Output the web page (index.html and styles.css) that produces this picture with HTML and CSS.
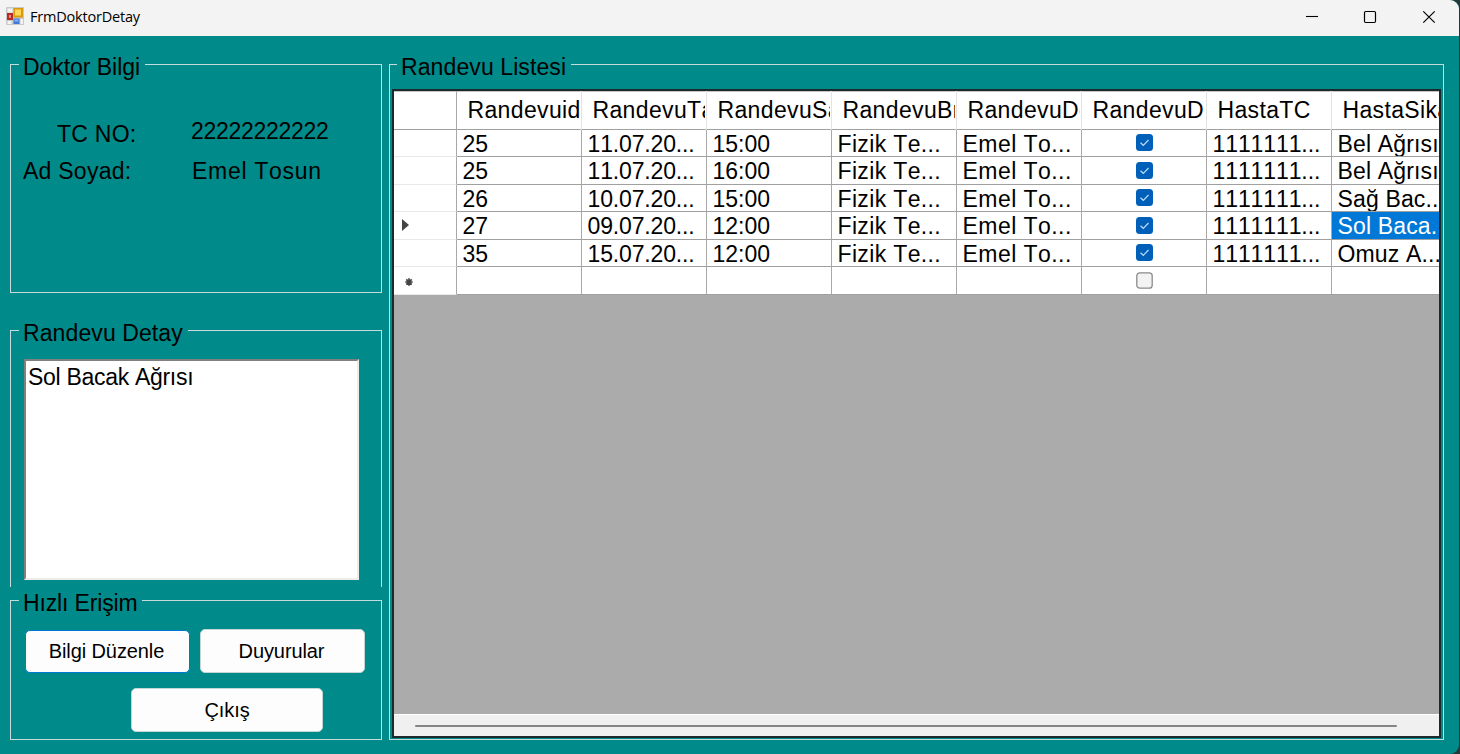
FILE: index.html
```html
<!DOCTYPE html>
<html lang="tr">
<head>
<meta charset="utf-8">
<title>FrmDoktorDetay</title>
<link rel="stylesheet" href="styles.css">
</head>
<body>
<div class="window">
  <header class="titlebar">
    <svg class="app-icon" width="18" height="18" viewBox="0 0 18 18">
      <rect width="18" height="18" rx="1" fill="#c9c9c9"/>
      <rect x="1.5" y="1.5" width="5" height="4" fill="#f4f4f4"/>
      <rect x="1" y="6" width="6" height="7" fill="#b52a22"/>
      <rect x="3" y="8" width="2" height="3" fill="#e58c80"/>
      <rect x="7.500" y="1" width="9.500" height="9.500" fill="#d99a10"/>
      <rect x="9" y="2.500" width="6" height="6" fill="#ffd75a"/>
      <rect x="7.500" y="11.500" width="6" height="5.500" fill="#3f78d8"/>
      <rect x="8.500" y="12.500" width="4" height="2" fill="#86b2f3"/>
      <rect x="1.500" y="14" width="4" height="3" fill="#f4f4f4"/>
      <rect x="14.500" y="12" width="2.500" height="5" fill="#f4f4f4"/>
    </svg>
    <span class="title">FrmDoktorDetay</span>
    <div class="controls">
      <svg width="58" height="36" viewBox="0 0 58 36"><path d="M17 16.500H29" stroke="#000" stroke-width="1.100"/></svg>
      <svg width="58" height="36" viewBox="0 0 58 36"><rect x="17.500" y="11.500" width="11" height="11" rx="1.200" fill="none" stroke="#000" stroke-width="1.200"/></svg>
      <svg width="58" height="36" viewBox="0 0 58 36"><path d="M18.300 11.300L29.700 22.700M29.700 11.300L18.300 22.700" stroke="#000" stroke-width="1.200"/></svg>
    </div>
  </header>
  <main class="form">
    <div class="side">
      <fieldset class="group info">
        <legend>Doktor Bilgi</legend>
        <div class="pair">
          <span class="label tc">TC NO:</span><span class="value number">22222222222</span>
          <span class="label">Ad Soyad:</span><span class="value">Emel Tosun</span>
        </div>
      </fieldset>
      <fieldset class="group detail">
        <legend>Randevu Detay</legend>
        <div class="textbox">Sol Bacak Ağrısı</div>
      </fieldset>
      <fieldset class="group quick">
        <legend>Hızlı Erişim</legend>
        <div class="buttons">
          <button class="btn focused">Bilgi Düzenle</button>
          <button class="btn">Duyurular</button>
          <button class="btn exit">Çıkış</button>
        </div>
      </fieldset>
    </div>
    <fieldset class="group list">
      <legend>Randevu Listesi</legend>
      <div class="datagrid">
        <div class="rows">
          <div class="row head"><i></i><b>Randevuid</b><b>RandevuTa</b><b>RandevuSa</b><b>RandevuBr</b><b>RandevuDo</b><b>RandevuD</b><b>HastaTC</b><b>HastaSika</b></div>
          <div class="row"><i></i><span>25</span><span>11.07.20...</span><span>15:00</span><span>Fizik Te...</span><span>Emel To...</span><span class="check"><svg width="17" height="17" viewBox="0 0 17 17"><rect width="17" height="17" rx="3.500" fill="#005fb8"/><path d="M4.500 8.700L7.300 11.300L12.500 6" fill="none" stroke="#b9dcf7" stroke-width="1.200"/></svg></span><span>1111111...</span><span>Bel Ağrısı</span></div>
          <div class="row"><i></i><span>25</span><span>11.07.20...</span><span>16:00</span><span>Fizik Te...</span><span>Emel To...</span><span class="check"><svg width="17" height="17" viewBox="0 0 17 17"><rect width="17" height="17" rx="3.500" fill="#005fb8"/><path d="M4.500 8.700L7.300 11.300L12.500 6" fill="none" stroke="#b9dcf7" stroke-width="1.200"/></svg></span><span>1111111...</span><span>Bel Ağrısı</span></div>
          <div class="row"><i></i><span>26</span><span>10.07.20...</span><span>15:00</span><span>Fizik Te...</span><span>Emel To...</span><span class="check"><svg width="17" height="17" viewBox="0 0 17 17"><rect width="17" height="17" rx="3.500" fill="#005fb8"/><path d="M4.500 8.700L7.300 11.300L12.500 6" fill="none" stroke="#b9dcf7" stroke-width="1.200"/></svg></span><span>1111111...</span><span>Sağ Bac...</span></div>
          <div class="row"><i><svg class="arrow" width="7" height="12" viewBox="0 0 7 12"><path d="M0 0L7 6L0 12Z" fill="#444"/></svg></i><span>27</span><span>09.07.20...</span><span>12:00</span><span>Fizik Te...</span><span>Emel To...</span><span class="check"><svg width="17" height="17" viewBox="0 0 17 17"><rect width="17" height="17" rx="3.500" fill="#005fb8"/><path d="M4.500 8.700L7.300 11.300L12.500 6" fill="none" stroke="#b9dcf7" stroke-width="1.200"/></svg></span><span>1111111...</span><span class="selected">Sol Baca...</span></div>
          <div class="row"><i></i><span>35</span><span>15.07.20...</span><span>12:00</span><span>Fizik Te...</span><span>Emel To...</span><span class="check"><svg width="17" height="17" viewBox="0 0 17 17"><rect width="17" height="17" rx="3.500" fill="#005fb8"/><path d="M4.500 8.700L7.300 11.300L12.500 6" fill="none" stroke="#b9dcf7" stroke-width="1.200"/></svg></span><span>1111111...</span><span>Omuz A...</span></div>
          <div class="row"><i><svg class="star" width="8" height="8" viewBox="0 0 8 8"><path d="M4 .3V7.700M.3 4H7.700M1.300 1.300L6.700 6.700M6.700 1.300L1.300 6.700" stroke="#444" stroke-width="1.700"/></svg></i><span></span><span></span><span></span><span></span><span></span><span class="check"><svg width="17" height="17" viewBox="0 0 17 17"><rect x=".8" y=".8" width="15.400" height="15.400" rx="3" fill="#f3f3f3" stroke="#8b8b8b" stroke-width="1.300"/></svg></span><span></span><span></span></div>
        </div>
        <div class="scrollbar"><div class="thumb"></div></div>
      </div>
    </fieldset>
  </main>
</div>
</body>
</html>
```
FILE: styles.css
```css
* { box-sizing: border-box; }
body {
  margin: 0;
  height: 754px;
  overflow: hidden;
  background: #25383a;
  font-family: "Liberation Sans", Arial, sans-serif;
  font-size: 23px;
  font-kerning: none;
  letter-spacing: 0;
  color: #000;
}
.window {
  width: 1459px;
  height: 754px;
  border-radius: 0 9px 9px 0;
  overflow: hidden;
  background: #008b8a;
}
.titlebar {
  height: 36px;
  display: flex;
  align-items: center;
  padding-left: 6px;
  background: #f3f3f3;
}
.app-icon { margin-top: -4px; }
.title {
  margin: -4px 0 0 6px;
  font: 14.5px "Open Sans", "Noto Sans", sans-serif;
  letter-spacing: -0.2px;
}
.controls { display: flex; margin-left: auto; margin-right: -4px; }
.form { display: flex; gap: 7px; padding: 14px 0 0 10px; }
.side { width: 372px; display: flex; flex-direction: column; }
.group {
  margin: 0;
  padding: 0;
  min-width: 0;
  border: 1px solid #c6dcdc;
}
legend {
  margin-left: 8px;
  padding: 6px 5px 0 4px;
  line-height: 22px;
  white-space: nowrap;
}
.info { height: 243px; margin-bottom: 23px; }
.info legend { letter-spacing: -0.05px; }
.pair {
  display: grid;
  grid-template-columns: 170px 1fr;
  row-gap: 11px;
  padding: 43px 0 0 12px;
  line-height: 26px;
}
.tc { padding-left: 34px; }
.label { letter-spacing: 0.25px; }
.value { letter-spacing: 0.7px; margin-left: -1px; }
.number { letter-spacing: -0.3px; margin: -3px 0 0 -2px; }
.detail { height: 271px; border-bottom: 0; margin-bottom: -1px; }
.detail legend { letter-spacing: 0.1px; }
.textbox {
  width: 335px;
  height: 221px;
  margin: 15px 0 0 13px;
  padding: 3px 2px;
  border: 2px solid;
  border-color: #808080 #ececec #ececec #808080;
  background: #fff;
  line-height: 26px;
  letter-spacing: -0.3px;
}
.quick { height: 154px; }
.quick legend { letter-spacing: -0.15px; }
.buttons {
  display: grid;
  grid-template-columns: 164px 165px;
  column-gap: 10px;
  row-gap: 15px;
  padding: 15px 0 0 15px;
}
.btn {
  height: 44px;
  padding: 0 2px 0 0;
  border: 1px solid #c4d5d5;
  border-radius: 5px;
  background: #fdfdfd;
  font: 20px "Liberation Sans", Arial, sans-serif;
  letter-spacing: -0.1px;
  color: #000;
}
.focused { height: 43px; margin: 1px 0 0 -1px; border-color: #0078d4; }
.exit { grid-column: 1 / 3; width: 192px; margin-left: 105px; padding: 0; }
.list { width: 1055px; height: 690px; }
.list legend { margin-left: 7px; letter-spacing: 0.1px; }
.datagrid {
  display: flex;
  flex-direction: column;
  width: 1049px;
  height: 649px;
  margin: 11px 0 0 2px;
  border: 2px solid #1b2b2b;
  background: #ababab;
  overflow: hidden;
}
.rows { width: 1200px; }
.row {
  display: grid;
  grid-template-columns: 63px repeat(8, 125px);
  height: 27.5px;
  line-height: 28px;
}
.row > * {
  border-right: 1px solid #a8a8a8;
  border-bottom: 1px solid #a0a0a0;
  background: #fff;
  overflow: hidden;
  white-space: nowrap;
}
.row span { padding-left: 5.5px; }
.row span:nth-child(3) { letter-spacing: -0.15px; }
.row span:nth-child(5) { letter-spacing: 0.35px; }
.row span:nth-child(6) { letter-spacing: 0.45px; }
.row span:nth-child(8) { letter-spacing: -0.1px; }
.row span:nth-child(9) { letter-spacing: 0.15px; }
.row i { border-bottom-color: #e8e8e8; display: flex; align-items: center; padding-left: 8px; }
.head { height: 38.5px; line-height: 37px; }
.head > * { border-top: 1px solid #c4c4c4; }
/* The transparent border ends the caption short of the column separator. */
.head b {
  padding-left: 10.5px;
  border-right: 2px solid transparent;
  background: linear-gradient(#e3e3e3, #e3e3e3) right / 1px 100% no-repeat border-box, #fff;
  font-weight: 400;
  letter-spacing: 0.35px;
}
.head i { border-bottom-color: #a0a0a0; border-right-color: #a8a8a8; }
.row .check { display: flex; justify-content: center; align-items: center; padding: 0; }
.row .selected { background: #0078d7; color: #fff; }
.star { margin: 3px 0 0 3px; }
.scrollbar {
  height: 22px;
  margin-top: auto;
  padding: 10px 42px 0 21px;
  border-top: 1px solid #fff;
  background: #f0f0f0;
}
.thumb { height: 2px; background: #858585; border-radius: 1px; }
```
